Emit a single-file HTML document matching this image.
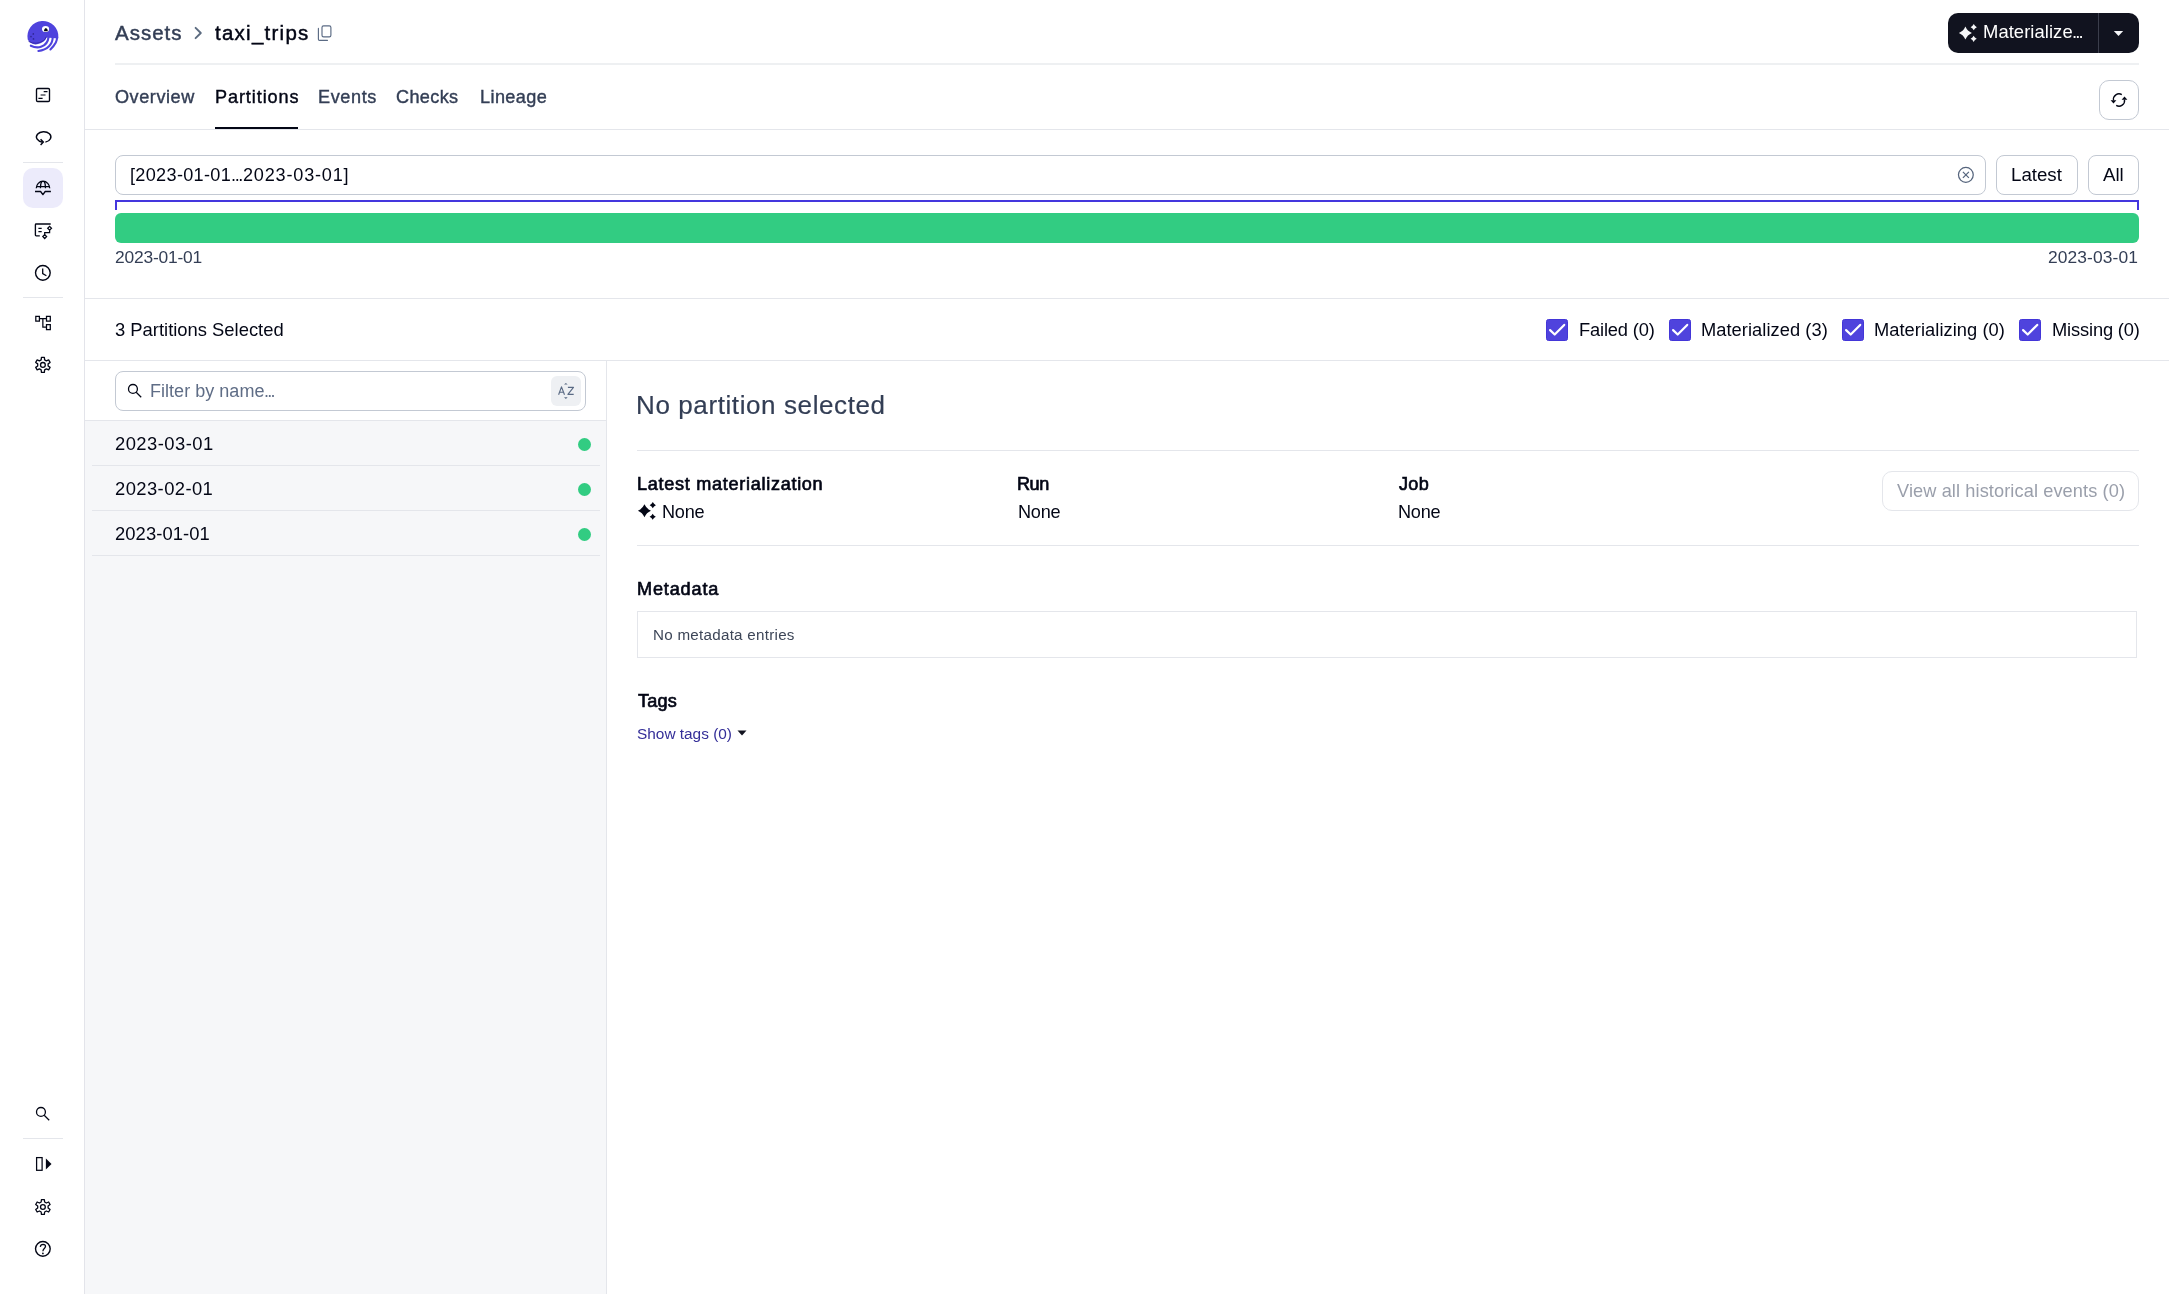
<!DOCTYPE html>
<html><head><meta charset="utf-8">
<style>
*{box-sizing:border-box;margin:0;padding:0}
html,body{width:2169px;height:1294px;overflow:hidden;background:#fff;font-family:"Liberation Sans",sans-serif;color:#030615}
.a{position:absolute}
.t{position:absolute;white-space:nowrap;line-height:1;will-change:transform}
svg.i{position:absolute;overflow:visible}
</style></head><body>
<div class="a" style="left:84px;top:0px;width:1px;height:1294px;background:#E3E4EA"></div>
<div class="a" style="left:23px;top:162px;width:40px;height:1px;background:#E4E6EB"></div>
<div class="a" style="left:23px;top:297px;width:40px;height:1px;background:#E4E6EB"></div>
<div class="a" style="left:23px;top:1138px;width:40px;height:1px;background:#E4E6EB"></div>
<div class="a" style="left:23px;top:168px;width:40px;height:40px;background:#ECEBFB;border-radius:10px"></div>
<div class="t" style="left:115px;top:22.75px;font-size:20.5px;color:#333E55;letter-spacing:1px;-webkit-text-stroke:0.45px #333E55;">Assets</div>
<div class="t" style="left:215px;top:22.75px;font-size:20.5px;color:#030615;letter-spacing:1.25px;-webkit-text-stroke:0.45px #030615;">taxi_trips</div>
<div class="a" style="left:115px;top:63px;width:2024px;height:2px;background:#EEF0F2"></div>
<div class="a" style="left:1948px;top:13px;width:191px;height:40px;background:#11131F;border-radius:10px"></div>
<div class="a" style="left:2098px;top:13px;width:1px;height:40px;background:#3B3E4C"></div>
<div class="t" style="left:1982.8px;top:23.02px;font-size:18.4px;color:#FFFFFF;letter-spacing:0.07px;">Materialize</div>
<div class="t" style="left:2072.2px;top:23.02px;font-size:18.4px;color:#FFFFFF;letter-spacing:-1.8px;">...</div>
<div class="a" style="left:2099px;top:80px;width:40px;height:40px;border:1px solid #C3C9D3;border-radius:10px;background:#fff"></div>
<div class="t" style="left:115px;top:87.78px;font-size:18.1px;color:#333E55;letter-spacing:0.55px;-webkit-text-stroke:0.4px #333E55;">Overview</div>
<div class="t" style="left:215px;top:87.78px;font-size:18.1px;color:#030615;letter-spacing:0.9px;-webkit-text-stroke:0.4px #030615;">Partitions</div>
<div class="t" style="left:318px;top:87.78px;font-size:18.1px;color:#333E55;letter-spacing:0.6px;-webkit-text-stroke:0.4px #333E55;">Events</div>
<div class="t" style="left:396px;top:87.78px;font-size:18.1px;color:#333E55;letter-spacing:0.35px;-webkit-text-stroke:0.4px #333E55;">Checks</div>
<div class="t" style="left:480px;top:87.78px;font-size:18.1px;color:#333E55;letter-spacing:0.4px;-webkit-text-stroke:0.4px #333E55;">Lineage</div>
<div class="a" style="left:215px;top:127px;width:83px;height:3px;background:#030615"></div>
<div class="a" style="left:85px;top:129px;width:2084px;height:1px;background:#E4E6EB"></div>
<div class="a" style="left:115px;top:155px;width:1871px;height:40px;border:1px solid #C3C9D3;border-radius:8px;background:#fff"></div>
<div class="t" style="left:129.6px;top:165.98px;font-size:18.1px;color:#030615;letter-spacing:0.32px;">[2023-01-01</div>
<div class="t" style="left:231.0px;top:165.98px;font-size:18.1px;color:#030615;letter-spacing:-1.35px;">...</div>
<div class="t" style="left:242.7px;top:165.98px;font-size:18.1px;color:#030615;letter-spacing:0.8px;">2023-03-01]</div>
<div class="a" style="left:1996px;top:155px;width:82px;height:40px;border:1px solid #C3C9D3;border-radius:8px;background:#fff"></div>
<div class="t" style="left:2011.3px;top:166.07px;font-size:18.7px;color:#030615;">Latest</div>
<div class="a" style="left:2088px;top:155px;width:51px;height:40px;border:1px solid #C3C9D3;border-radius:8px;background:#fff"></div>
<div class="t" style="left:2103.3px;top:166.07px;font-size:18.7px;color:#030615;">All</div>
<div class="a" style="left:115px;top:200px;width:2024px;height:2px;background:#4436DE"></div>
<div class="a" style="left:115px;top:200px;width:2px;height:10px;background:#4436DE"></div>
<div class="a" style="left:2137px;top:200px;width:2px;height:10px;background:#4436DE"></div>
<div class="a" style="left:115px;top:213px;width:2024px;height:30px;background:#32CC82;border-radius:6px"></div>
<div class="t" style="left:114.9px;top:248.77px;font-size:17.4px;color:#333E55;letter-spacing:-0.2px;">2023-01-01</div>
<div class="t" style="left:2048.0px;top:248.77px;font-size:17.4px;color:#333E55;letter-spacing:0.1px;">2023-03-01</div>
<div class="a" style="left:85px;top:298px;width:2084px;height:1px;background:#E4E6EB"></div>
<div class="t" style="left:114.9px;top:321.22px;font-size:18.4px;color:#030615;">3 Partitions Selected</div>
<div class="a" style="left:1546px;top:319px;width:22px;height:22px;background:#4F43DD;border:1px solid #4336D8;border-radius:2.5px"></div>
<svg class="i" style="left:1546px;top:319px" width="22" height="22" viewBox="0 0 22 22"><path d="M4.1 11.1 L8.7 15.5 L18.2 5.9" fill="none" stroke="#fff" stroke-width="2.2" stroke-linecap="round" stroke-linejoin="round"/></svg>
<div class="t" style="left:1578.9px;top:320.81px;font-size:18.3px;color:#030615;letter-spacing:-0.15px;">Failed (0)</div>
<div class="a" style="left:1669px;top:319px;width:22px;height:22px;background:#4F43DD;border:1px solid #4336D8;border-radius:2.5px"></div>
<svg class="i" style="left:1669px;top:319px" width="22" height="22" viewBox="0 0 22 22"><path d="M4.1 11.1 L8.7 15.5 L18.2 5.9" fill="none" stroke="#fff" stroke-width="2.2" stroke-linecap="round" stroke-linejoin="round"/></svg>
<div class="t" style="left:1701.0px;top:320.81px;font-size:18.3px;color:#030615;letter-spacing:0.05px;">Materialized (3)</div>
<div class="a" style="left:1842px;top:319px;width:22px;height:22px;background:#4F43DD;border:1px solid #4336D8;border-radius:2.5px"></div>
<svg class="i" style="left:1842px;top:319px" width="22" height="22" viewBox="0 0 22 22"><path d="M4.1 11.1 L8.7 15.5 L18.2 5.9" fill="none" stroke="#fff" stroke-width="2.2" stroke-linecap="round" stroke-linejoin="round"/></svg>
<div class="t" style="left:1874.3px;top:320.81px;font-size:18.3px;color:#030615;letter-spacing:0.05px;">Materializing (0)</div>
<div class="a" style="left:2019px;top:319px;width:22px;height:22px;background:#4F43DD;border:1px solid #4336D8;border-radius:2.5px"></div>
<svg class="i" style="left:2019px;top:319px" width="22" height="22" viewBox="0 0 22 22"><path d="M4.1 11.1 L8.7 15.5 L18.2 5.9" fill="none" stroke="#fff" stroke-width="2.2" stroke-linecap="round" stroke-linejoin="round"/></svg>
<div class="t" style="left:2051.7px;top:320.81px;font-size:18.3px;color:#030615;letter-spacing:-0.15px;">Missing (0)</div>
<div class="a" style="left:85px;top:360px;width:2084px;height:1px;background:#E4E6EB"></div>
<div class="a" style="left:85px;top:420px;width:521px;height:874px;background:#F6F7F9"></div>
<div class="a" style="left:85px;top:420px;width:521px;height:1px;background:#E4E6EB"></div>
<div class="a" style="left:606px;top:361px;width:1px;height:933px;background:#E4E6EB"></div>
<div class="a" style="left:115px;top:371px;width:471px;height:40px;border:1px solid #C3C9D3;border-radius:8px;background:#fff"></div>
<div class="t" style="left:149.7px;top:382.26px;font-size:18px;color:#5F6D86;letter-spacing:0.03px;">Filter by name</div>
<div class="t" style="left:264.4px;top:382.26px;font-size:18px;color:#5F6D86;letter-spacing:-1.75px;">...</div>
<div class="a" style="left:551px;top:376px;width:30px;height:30px;background:#EEF0F3;border-radius:6px"></div>
<div class="t" style="left:114.9px;top:434.92px;font-size:18.4px;color:#030615;letter-spacing:0.45px;">2023-03-01</div>
<div class="a" style="left:92px;top:465px;width:508px;height:1px;background:#E4E6EB"></div>
<div class="a" style="left:578px;top:437.5px;width:13px;height:13.0px;background:#32CC82;border-radius:50%"></div>
<div class="t" style="left:114.9px;top:479.92px;font-size:18.4px;color:#030615;letter-spacing:0.42px;">2023-02-01</div>
<div class="a" style="left:92px;top:510px;width:508px;height:1px;background:#E4E6EB"></div>
<div class="a" style="left:578px;top:482.5px;width:13px;height:13.0px;background:#32CC82;border-radius:50%"></div>
<div class="t" style="left:114.9px;top:524.92px;font-size:18.4px;color:#030615;letter-spacing:0.07px;">2023-01-01</div>
<div class="a" style="left:92px;top:555px;width:508px;height:1px;background:#E4E6EB"></div>
<div class="a" style="left:578px;top:527.5px;width:13px;height:13.0px;background:#32CC82;border-radius:50%"></div>
<div class="t" style="left:636.2px;top:392.49px;font-size:26px;color:#333E55;letter-spacing:0.6px;-webkit-text-stroke:0.2px #333E55;">No partition selected</div>
<div class="a" style="left:637px;top:450px;width:1502px;height:1px;background:#E4E6EB"></div>
<div class="t" style="left:637px;top:474.68px;font-size:18.1px;color:#030615;letter-spacing:0.7px;-webkit-text-stroke:0.65px #030615;">Latest materialization</div>
<div class="t" style="left:1017.4px;top:474.68px;font-size:18.1px;color:#030615;letter-spacing:-0.45px;-webkit-text-stroke:0.65px #030615;">Run</div>
<div class="t" style="left:1399px;top:474.68px;font-size:18.1px;color:#030615;letter-spacing:0.3px;-webkit-text-stroke:0.65px #030615;">Job</div>
<div class="t" style="left:662.3px;top:503.18px;font-size:18.1px;color:#030615;letter-spacing:-0.25px;">None</div>
<div class="t" style="left:1017.7px;top:503.18px;font-size:18.1px;color:#030615;letter-spacing:-0.25px;">None</div>
<div class="t" style="left:1398.0px;top:503.18px;font-size:18.1px;color:#030615;letter-spacing:-0.25px;">None</div>
<div class="a" style="left:1882px;top:471px;width:257px;height:40px;border:1px solid #E4E6EB;border-radius:10px;background:#fff"></div>
<div class="t" style="left:1896.6px;top:481.89px;font-size:18.2px;color:#9A9FAB;letter-spacing:0.1px;">View all historical events (0)</div>
<div class="a" style="left:637px;top:545px;width:1502px;height:1px;background:#E4E6EB"></div>
<div class="t" style="left:637.1px;top:579.68px;font-size:18.1px;color:#030615;letter-spacing:0.85px;-webkit-text-stroke:0.65px #030615;">Metadata</div>
<div class="a" style="left:637px;top:611px;width:1500px;height:47px;border:1px solid #E4E6EB;background:#fff"></div>
<div class="t" style="left:652.6px;top:627.03px;font-size:15.2px;color:#3D4658;letter-spacing:0.26px;">No metadata entries</div>
<div class="t" style="left:637.6px;top:691.68px;font-size:18.1px;color:#030615;letter-spacing:0.2px;-webkit-text-stroke:0.65px #030615;">Tags</div>
<div class="t" style="left:636.9px;top:726.26px;font-size:15.4px;color:#342E98;">Show tags (0)</div>
<svg class="i" style="left:737px;top:730px" width="10" height="6" viewBox="0 0 10 6"><path d="M0.5 0.5 L9.5 0.5 L5 5.5 Z" fill="#11131F"/></svg>
<svg class="i" style="left:0;top:0" width="2169" height="1294" viewBox="0 0 2169 1294">
<path d="M27.71 39.6 A15.5 15.5 0 1 1 58.36 37.6 L58.2 38.6 L46.6 37.4 Q44.8 42.6 37 44.3 Q31 45.2 27.71 39.6 Z" fill="#4F43DD"/>
<path d="M30.8 45.7 C34 47.3 37.5 47.9 41 46.8 C45 45.5 48 42 48.6 37 M38.4 51 C42 50.6 46 49.3 49 46.3 C51.5 43.8 52.6 41 52.7 37.5 M50.4 49.5 C52.5 47.5 54.5 45 55.8 42.5 C56.6 40.8 57 39.5 57.1 37.5" fill="none" stroke="#4F43DD" stroke-width="2.1" stroke-linecap="round"/>
<path d="M28.6 41.4 Q36 45.5 43.6 40.6 Q45.4 39 46.3 36.8" fill="none" stroke="#3328A6" stroke-width="0.9"/>
<ellipse cx="45.55" cy="29" rx="3.6" ry="3.1" fill="#fff"/><path d="M43.9 31.3 Q44.2 28.2 45.9 27.9 Q47.6 28.2 47.9 31.3 Z" fill="#030615"/>
<circle cx="33.3" cy="33.9" r="0.85" fill="#2F2796"/><circle cx="31" cy="36.6" r="0.85" fill="#2F2796"/><circle cx="33.5" cy="38.9" r="0.85" fill="#2F2796"/>
<rect x="36.5" y="88.5" width="13" height="13" rx="1.2" fill="none" stroke="#030615" stroke-width="1.35"/>
<path d="M43.7 91.6 H47.5 M40.6 95 H45.5 M38.4 98.4 H42.6" stroke="#030615" stroke-width="1.2"/>
<path d="M45.4 142.1 A7.2 5.3 0 1 0 42.6 142.2" fill="none" stroke="#030615" stroke-width="1.45"/>
<path d="M40.6 139.3 L43.3 142.1 L40.6 144.9" fill="none" stroke="#030615" stroke-width="1.45"/>
<path d="M36.3 188.3 A6.7 7 0 0 1 49.7 188.3" fill="none" stroke="#030615" stroke-width="1.35"/>
<path d="M36.5 186.5 H49.5 M40.4 188.3 Q40.3 183.5 41.8 181.3 M45.5 188.3 Q45.6 183.5 44.2 181.3" fill="none" stroke="#030615" stroke-width="1.25"/>
<path d="M35 191.5 H40.6 L42.9 194.6 L45.2 191.5 H50.9" fill="none" stroke="#030615" stroke-width="1.35" stroke-linejoin="round"/>
<path d="M50.7 224 H36.2 Q35.4 224 35.4 224.8 V235 Q35.4 235.8 36.2 235.8 H39.8" fill="none" stroke="#030615" stroke-width="1.35"/>
<path d="M38.4 228.3 H41.7 M38.4 231.6 H41.7" stroke="#030615" stroke-width="1.2"/>
<path d="M49.6 226.4 L51.5 228.3 L49.6 230.2 L47.7 228.3 Z M44.7 234.7 L46.6 236.6 L44.7 238.5 L42.8 236.6 Z" fill="none" stroke="#030615" stroke-width="1.25"/>
<path d="M49.6 230.2 V232.5 H44.7 V234.7" fill="none" stroke="#030615" stroke-width="1.25"/>
<circle cx="42.86" cy="272.86" r="7.35" fill="none" stroke="#030615" stroke-width="1.4"/>
<path d="M42.7 268.6 V273.6 L46.4 275.7" fill="none" stroke="#030615" stroke-width="1.3"/>
<path d="M35.8 316.4 H39.4 V321.1 H35.8 Z M46.5 316.4 H50.3 V321.1 H46.5 Z M46.5 324.6 H50.3 V329.5 H46.5 Z" fill="none" stroke="#030615" stroke-width="1.25"/>
<path d="M39.4 318.7 H46.5 M42.86 318.7 V327.1 H46.5" fill="none" stroke="#030615" stroke-width="1.25"/>
<path d="M41.17 359.89 L41.45 357.44 L44.35 357.44 L44.63 359.89 L46.38 360.90 L48.64 359.91 L50.09 362.43 L48.10 363.89 L48.10 365.91 L50.09 367.37 L48.64 369.89 L46.38 368.90 L44.63 369.91 L44.35 372.36 L41.45 372.36 L41.17 369.91 L39.42 368.90 L37.16 369.89 L35.71 367.37 L37.70 365.91 L37.70 363.89 L35.71 362.43 L37.16 359.91 L39.42 360.90 Z" fill="none" stroke="#030615" stroke-width="1.3" stroke-linejoin="round"/><circle cx="42.9" cy="364.9" r="2.4" fill="none" stroke="#030615" stroke-width="1.3"/>
<circle cx="40.95" cy="1111.95" r="4.45" fill="none" stroke="#030615" stroke-width="1.3"/><path d="M44.2 1115.2 L49.2 1120.2" stroke="#030615" stroke-width="1.3"/>
<rect x="36.6" y="1157.6" width="5.5" height="12.7" fill="none" stroke="#030615" stroke-width="1.25"/><path d="M45.9 1158.6 L51.5 1164.1 L45.9 1169.5 Z" fill="#030615"/>
<path d="M41.17 1201.99 L41.45 1199.54 L44.35 1199.54 L44.63 1201.99 L46.38 1203.00 L48.64 1202.01 L50.09 1204.53 L48.10 1205.99 L48.10 1208.01 L50.09 1209.47 L48.64 1211.99 L46.38 1211.00 L44.63 1212.01 L44.35 1214.46 L41.45 1214.46 L41.17 1212.01 L39.42 1211.00 L37.16 1211.99 L35.71 1209.47 L37.70 1208.01 L37.70 1205.99 L35.71 1204.53 L37.16 1202.01 L39.42 1203.00 Z" fill="none" stroke="#030615" stroke-width="1.3" stroke-linejoin="round"/><circle cx="42.9" cy="1207.0" r="2.4" fill="none" stroke="#030615" stroke-width="1.3"/>
<circle cx="42.86" cy="1248.86" r="7.35" fill="none" stroke="#030615" stroke-width="1.4"/>
<path d="M40.3 1246.8 Q40.6 1244.4 43.1 1244.4 Q45.5 1244.5 45.5 1246.3 Q45.5 1247.3 44.3 1248.6 Q43 1249.8 42.9 1251.2" fill="none" stroke="#030615" stroke-width="1.3"/><circle cx="42.9" cy="1253.4" r="0.85" fill="#030615"/>
<path d="M195.6 27.8 L200.8 33 L195.6 38.2" fill="none" stroke="#5C6B80" stroke-width="1.9" stroke-linecap="round" stroke-linejoin="round"/>
<rect x="322" y="25.9" width="8.9" height="11" rx="1.6" fill="none" stroke="#5A6A84" stroke-width="1.15"/><path d="M318.4 28.4 V39.2 Q318.4 40.3 319.5 40.3 H327.5" fill="none" stroke="#5A6A84" stroke-width="1.15" stroke-linecap="round"/>
<path d="M1965.40 26.40 Q1967.35 30.95 1971.90 32.90 Q1967.35 34.85 1965.40 39.40 Q1963.45 34.85 1958.90 32.90 Q1963.45 30.95 1965.40 26.40 Z M1973.75 24.10 Q1974.68 26.27 1976.85 27.20 Q1974.68 28.13 1973.75 30.30 Q1972.82 28.13 1970.65 27.20 Q1972.82 26.27 1973.75 24.10 Z M1973.65 35.70 Q1974.58 37.87 1976.75 38.80 Q1974.58 39.73 1973.65 41.90 Q1972.72 39.73 1970.55 38.80 Q1972.72 37.87 1973.65 35.70 Z" fill="#F5F6F8"/>
<path d="M2113.8 31 L2123.2 31 L2118.5 36 Z" fill="#F5F6F8"/>
<path d="M2121.8 94.6 A5.6 5.6 0 0 0 2113.5 100.4 M2116.2 105.4 A5.6 5.6 0 0 0 2124.5 99.6" fill="none" stroke="#030615" stroke-width="1.35"/>
<path d="M2110.6 100.3 H2116.4 L2113.5 103.6 Z M2121.6 99.7 H2127.4 L2124.5 96.4 Z" fill="#030615"/>
<circle cx="1965.86" cy="174.86" r="7.4" fill="none" stroke="#56657D" stroke-width="1.25"/><path d="M1962.9 171.9 L1968.9 177.9 M1968.9 171.9 L1962.9 177.9" stroke="#56657D" stroke-width="1.2"/>
<circle cx="132.95" cy="388.95" r="4.45" fill="none" stroke="#030615" stroke-width="1.3"/><path d="M136.2 392.2 L141.2 397.2" stroke="#030615" stroke-width="1.3"/>
<path d="M558.6 394.8 L561.5 386.9 L564.5 394.8 M559.6 392.2 H563.5 M567.9 387.4 H573.5 L567.9 394.4 H573.7" fill="none" stroke="#5A6A84" stroke-width="1.15" stroke-linejoin="round"/>
<path d="M564 384.6 L565.86 382.9 L567.7 384.6 Z M564 397.3 L565.86 399 L567.7 397.3 Z" fill="#5A6A84"/>
<path d="M644.45 504.36 Q646.40 508.91 650.95 510.86 Q646.40 512.81 644.45 517.36 Q642.50 512.81 637.95 510.86 Q642.50 508.91 644.45 504.36 Z M652.80 502.06 Q653.73 504.23 655.90 505.16 Q653.73 506.09 652.80 508.26 Q651.87 506.09 649.70 505.16 Q651.87 504.23 652.80 502.06 Z M652.70 513.66 Q653.63 515.83 655.80 516.76 Q653.63 517.69 652.70 519.86 Q651.77 517.69 649.60 516.76 Q651.77 515.83 652.70 513.66 Z" fill="#030615"/>
</svg>
</body></html>
